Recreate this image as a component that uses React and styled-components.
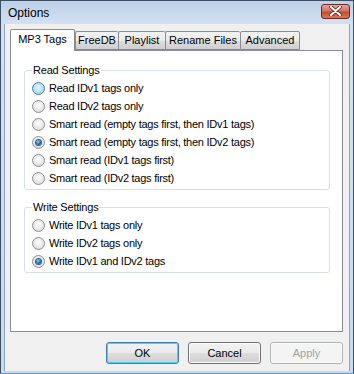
import React from 'react';
import styled, { createGlobalStyle } from 'styled-components';

const GlobalStyle = createGlobalStyle`
    html, body {
        margin: 0;
        padding: 0;
        background: #ffffff;
    }
    body {
        font-family: "Liberation Sans", Arial, sans-serif;
        font-size: 11px;
        color: #000;
    }
`;

const Window = styled.div`
    width: 354px;
    height: 374px;
    box-sizing: border-box;
    border: 1px solid #3d4f63;
    border-bottom-color: #28b4d8;
    background: linear-gradient(to bottom, #bdd0e8 0px, #d4e1f1 24px, #c9d9ee 100%);
    padding: 0 3px 2px 3px;
    display: flex;
    flex-direction: column;
`;

const TitleBar = styled.div`
    height: 23px;
    display: flex;
    align-items: center;
    justify-content: space-between;
    padding: 0 0 0 4px;
`;

const Title = styled.span`
    font-size: 12px;
    color: #000;
    margin-top: 1px;
`;

const CloseButton = styled.div`
    width: 29px;
    height: 15px;
    margin-top: -3px;
    box-sizing: border-box;
    border: 1px solid #6b2a24;
    border-radius: 3px;
    background: linear-gradient(to bottom, #e8a597 0%, #d4735f 45%, #c04c34 55%, #d37a5e 100%);
    display: flex;
    align-items: center;
    justify-content: center;
`;

const Client = styled.div`
    flex: 1;
    background: #f0f0f0;
    border-left: 1px solid #8ea5c0;
    border-right: 1px solid #8ea5c0;
    padding: 5px 6px 7px 5px;
    display: flex;
    flex-direction: column;
`;

const TabStrip = styled.div`
    display: flex;
    align-items: flex-end;
    height: 21px;
    flex-shrink: 0;
    position: relative;
    z-index: 1;
`;

const Tab = styled.div`
    box-sizing: border-box;
    width: ${p => p.w}px;
    height: ${p => (p.active ? '22px' : '19px')};
    margin-bottom: ${p => (p.active ? '-1px' : '0')};
    padding-top: ${p => (p.active ? '3px' : '2px')};
    text-align: center;
    border: 1px solid #898c95;
    border-bottom: ${p => (p.active ? 'none' : '1px solid #898c95')};
    border-right: ${p => (p.last || p.active ? '1px solid #898c95' : 'none')};
    border-radius: 2px 2px 0 0;
    background: ${p => (p.active ? '#ffffff' : 'linear-gradient(to bottom, #f2f2f2 0%, #ebebeb 50%, #dddddd 51%, #cfcfcf 100%)')};
    white-space: nowrap;
`;

const Panel = styled.div`
    height: 282px;
    flex-shrink: 0;
    box-sizing: border-box;
    background: #ffffff;
    border: 1px solid #898c95;
    padding: 13px 12px 0 13px;
    display: flex;
    flex-direction: column;
    gap: 11px;
`;

const Group = styled.fieldset`
    margin: 0;
    border: 1px solid #d5dfe5;
    border-radius: 3px;
    padding: 2px 6px 2px 7px;
    display: flex;
    flex-direction: column;
`;

const Legend = styled.legend`
    padding: 0 1px;
    margin-left: 0;
    line-height: 13px;
    letter-spacing: -0.2px;
`;

const RadioRow = styled.div`
    height: 18px;
    display: flex;
    align-items: center;
    gap: 4px;
    letter-spacing: -0.25px;
`;

const RadioCircle = styled.span`
    width: 13px;
    height: 13px;
    box-sizing: border-box;
    border-radius: 50%;
    border: 1px solid ${p => (p.hover ? '#3c7fb1' : '#8f8f8f')};
    background: ${p => (p.hover
        ? 'radial-gradient(circle at 50% 40%, #e5f4fd 0%, #b5dcf5 60%, #9fcfee 100%)'
        : 'radial-gradient(circle at 50% 40%, #ffffff 0%, #e6e6e6 60%, #cfcfcf 100%)')};
    display: flex;
    align-items: center;
    justify-content: center;
    flex-shrink: 0;
`;

const RadioDot = styled.span`
    width: 5px;
    height: 5px;
    border-radius: 50%;
    background: radial-gradient(circle at 40% 35%, #8ad0f5 0%, #1b6fb1 55%, #0c3f73 100%);
    box-shadow: 0 0 0 1px #245c8f;
`;

const ButtonBar = styled.div`
    display: flex;
    justify-content: flex-end;
    gap: 9px;
    margin-top: 10px;
`;

const Button = styled.button`
    width: 73px;
    height: 22px;
    padding: 0;
    box-sizing: border-box;
    font-family: "Liberation Sans", Arial, sans-serif;
    font-size: 11px;
    border-radius: 3px;
    border: 1px solid ${p => (p.primary ? '#3c7fb1' : p.disabled ? '#adb2b5' : '#707070')};
    color: ${p => (p.disabled ? '#a0a0a0' : '#000')};
    background: ${p => (p.disabled
        ? '#f4f4f4'
        : 'linear-gradient(to bottom, #f2f2f2 0%, #ebebeb 50%, #dddddd 51%, #cfcfcf 100%)')};
    box-shadow: ${p => (p.primary ? 'inset 0 0 0 1px #48d3fb' : 'inset 0 0 0 1px #fbfbfb')};
`;

const Radio = ({ label, checked, hover }) => (
    <RadioRow>
        <RadioCircle hover={hover}>{checked && <RadioDot />}</RadioCircle>
        <span>{label}</span>
    </RadioRow>
);

const readOptions = [
    'Read IDv1 tags only',
    'Read IDv2 tags only',
    'Smart read (empty tags first, then IDv1 tags)',
    'Smart read (empty tags first, then IDv2 tags)',
    'Smart read (IDv1 tags first)',
    'Smart read (IDv2 tags first)',
];

const writeOptions = [
    'Write IDv1 tags only',
    'Write IDv2 tags only',
    'Write IDv1 and IDv2 tags',
];

const tabs = [
    { label: 'MP3 Tags', w: 65 },
    { label: 'FreeDB', w: 43 },
    { label: 'Playlist', w: 47 },
    { label: 'Rename Files', w: 75 },
    { label: 'Advanced', w: 60 },
];

const App = () => {
    return (
        <Window>
            <GlobalStyle />
            <TitleBar>
                <Title>Options</Title>
                <CloseButton>
                    <svg width="13" height="10" viewBox="0 0 13 10">
                        <path d="M2 1 L11 9 M11 1 L2 9" stroke="#5a2a22" strokeWidth="3.6" strokeLinecap="round" />
                        <path d="M2 1 L11 9 M11 1 L2 9" stroke="#ffffff" strokeWidth="2" strokeLinecap="round" />
                    </svg>
                </CloseButton>
            </TitleBar>
            <Client>
                <TabStrip>
                    {tabs.map((t, i) => (
                        <Tab key={t.label} w={t.w} active={i === 0} last={i === tabs.length - 1}>{t.label}</Tab>
                    ))}
                </TabStrip>
                <Panel>
                    <Group>
                        <Legend>Read Settings</Legend>
                        {readOptions.map((o, i) => (
                            <Radio key={o} label={o} hover={i === 0} checked={i === 3} />
                        ))}
                    </Group>
                    <Group>
                        <Legend>Write Settings</Legend>
                        {writeOptions.map((o, i) => (
                            <Radio key={o} label={o} checked={i === 2} />
                        ))}
                    </Group>
                </Panel>
                <ButtonBar>
                    <Button primary>OK</Button>
                    <Button>Cancel</Button>
                    <Button disabled>Apply</Button>
                </ButtonBar>
            </Client>
        </Window>
    );
};

export default App;
